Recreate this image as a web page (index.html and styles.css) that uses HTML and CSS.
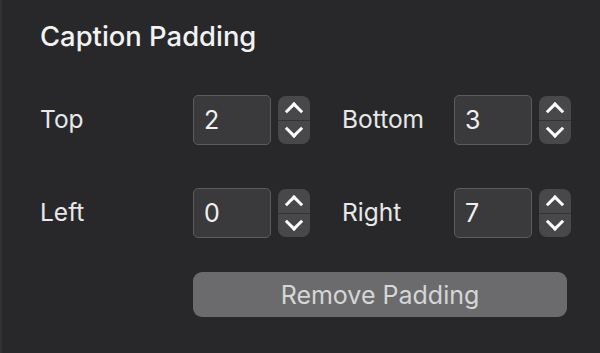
FILE: index.html
```html
<!DOCTYPE html>
<html>
<head>
	<meta charset="utf-8">
	<title>Caption Padding</title>
	<link rel="stylesheet" href="styles.css">
</head>
<body>
	<div class="panel">
		<h1 class="title">Caption Padding</h1>
		<div class="fields">
			<div class="row">
				<span class="label">Top</span>
				<div class="field"><input class="num" type="text" value="2"><div class="stepper"><span class="up"></span><span class="down"></span></div></div>
				<span class="label">Bottom</span>
				<div class="field"><input class="num" type="text" value="3"><div class="stepper"><span class="up"></span><span class="down"></span></div></div>
			</div>
			<div class="row">
				<span class="label">Left</span>
				<div class="field"><input class="num" type="text" value="0"><div class="stepper"><span class="up"></span><span class="down"></span></div></div>
				<span class="label">Right</span>
				<div class="field"><input class="num" type="text" value="7"><div class="stepper"><span class="up"></span><span class="down"></span></div></div>
			</div>
			<div class="actions">
				<button class="btn">Remove Padding</button>
			</div>
		</div>
	</div>
</body>
</html>
```
FILE: styles.css
```css
*{
	margin:0;
	padding:0;
	box-sizing:border-box;
}
html,body{
	height:100%;
}
body{
	background:#28282b;
	font-family:Inter,"Noto Sans",sans-serif;
	color:#f0f0f0;
	border-left:2px solid #323235;
}
.panel{
	padding:19px 0 0 38px;
}
.title{
	font-size:27.4px;
	font-weight:500;
	line-height:34px;
	color:#f2f2f2;
}
.fields{
	margin-top:42px;
}
.row{
	display:grid;
	grid-template-columns:153px 149px 112px 117px;
	align-items:center;
	height:50px;
	margin-bottom:43px;
}
.row:nth-child(2){
	margin-bottom:34px;
}
.label{
	font-size:24.5px;
	color:#e8e8e8;
	margin-top:-2px;
}
.field{
	display:flex;
	align-items:center;
	gap:7px;
}
.num{
	width:78px;
	height:50px;
	background:#3a3a3c;
	border:1.5px solid #5c5c5e;
	border-radius:5px;
	color:#f0f0f0;
	font-family:inherit;
	font-size:25px;
	padding-left:10px;
	outline:none;
}
.stepper{
	width:32px;
	height:48px;
	background:#48484b;
	border-radius:8px;
	display:flex;
	flex-direction:column;
}
.stepper span{
	flex:1;
	position:relative;
}
.stepper .up{
	border-bottom:1px solid #333335;
}
.stepper span::after{
	content:"";
	position:absolute;
	left:50%;
	top:50%;
	width:10px;
	height:10px;
	border-left:3px solid #fff;
	border-top:3px solid #fff;
}
.stepper .up::after{
	transform:translate(-50%,-25%) rotate(45deg);
}
.stepper .down::after{
	transform:translate(-50%,-75%) rotate(225deg);
}
.actions{
	padding-left:153px;
}
.btn{
	width:374px;
	height:45px;
	background:#6b6b6d;
	border:none;
	border-radius:9px;
	color:#d6d6d6;
	font-family:inherit;
	font-size:25px;
}
```
